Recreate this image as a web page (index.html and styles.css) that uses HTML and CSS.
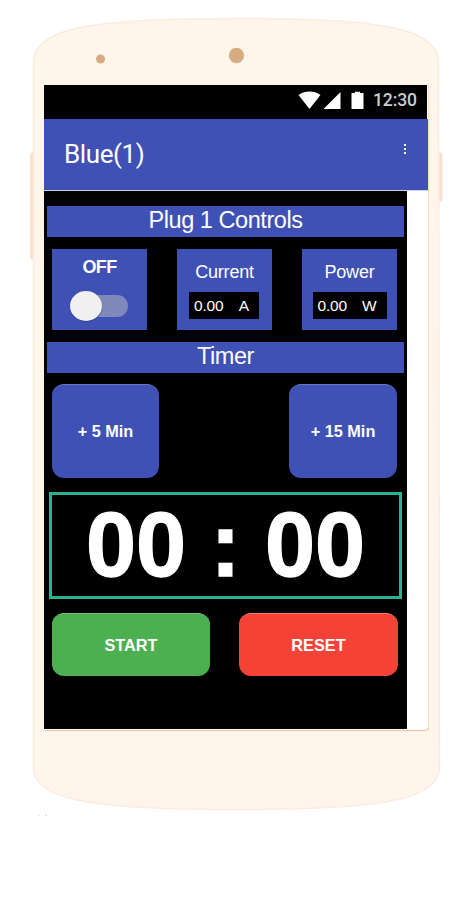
FILE: index.html
```html
<!DOCTYPE html>
<html lang="en">
<head>
<meta charset="utf-8">
<title>Blue(1)</title>
<link rel="stylesheet" href="styles.css">
</head>
<body>
<div class="phone">
  <svg class="shell" width="463" height="830" viewBox="0 0 463 830" aria-hidden="true">
    <path d="M33.500 153H30.500V259H33.500ZM439 153H442V201H439Z" fill="#f8e0ca" stroke="#f7e4d5"/>
    <path d="M33.500 62C33.500 26 100 18.500 236 18.500S438.500 26 438.500 62L439.500 768C439.500 802 370 809.500 236 809.500S33.500 802 33.500 768Z" fill="#fff5ea" stroke="#fcebe0" stroke-width="1.500"/>
    <circle cx="100.500" cy="59" r="4.500" fill="#d6ad82"/>
    <circle cx="236.500" cy="55.500" r="7.700" fill="#d6ad82"/>
    <path d="M39 815.500h1M45 815.500h2" stroke="#ddd"/>
  </svg>
  <main class="screen">
    <div class="status">
      <svg class="signals" width="66" height="20" viewBox="0 0 66 20" fill="#fff" aria-hidden="true">
        <path d="M0.500 4C7-0.600 16-0.600 22.500 4L11.500 18Z"/>
        <path d="M42.500 1V18H25.500Z"/>
        <path d="M53.500 2H57V.8H62V2H65.500V18H53.500Z"/>
      </svg>
      <span class="clock">12:30</span>
    </div>
    <header class="appbar">
      <h1>Blue(1)</h1>
      <div class="menu"><i></i><i></i><i></i></div>
    </header>
    <div class="content">
      <h2>Plug 1 Controls</h2>
      <div class="cards">
        <section class="card toggle">
          <b>OFF</b>
          <div class="switch"><div class="knob"></div></div>
        </section>
        <section class="card">
          <span class="label">Current</span>
          <div class="reading amps"><span>0.00</span><span>A</span></div>
        </section>
        <section class="card">
          <span class="label">Power</span>
          <div class="reading watts"><span>0.00</span><span>W</span></div>
        </section>
      </div>
      <h2 class="timer-title">Timer</h2>
      <div class="row adders">
        <button>+ 5 Min</button>
        <button class="wide">+ 15 Min</button>
      </div>
      <div class="timer"><span>00</span><span>:</span><span>00</span></div>
      <div class="row actions">
        <button class="start">START</button>
        <button class="reset">RESET</button>
      </div>
    </div>
  </main>
</div>
</body>
</html>
```
FILE: styles.css
```css
* { box-sizing: border-box; }
body { margin: 0; background: #fff; color: #fff; font-family: "Liberation Sans", Arial, sans-serif; }
.phone { position: relative; width: 463px; height: 909px; padding: 85px 35px 0 44px; overflow: hidden; }
.shell { position: absolute; left: 0; top: 0; }
.screen { position: relative; width: 384px; height: 644px; background: #fff; border-radius: 0 0 3px 0; box-shadow: 1px 0 0 #f3dfc8, 0 1px 0 #fff8f2, 1px 2px 1px #ebc5ad; }
.status { display: flex; justify-content: flex-end; width: 383px; height: 34px; padding: 6px 10px 0 0; background: #000; }
.clock { width: 44px; margin-left: 9px; color: #ccc; font: 500 17.5px/18px Roboto, sans-serif; letter-spacing: -.1px; white-space: nowrap; }
.appbar { display: flex; justify-content: space-between; height: 72px; padding: 0 22px 0 20px; background: #3f51b5; border-bottom: 1px solid #c5d1f2; }
h1 { margin: 0; font: 400 26px/71px Roboto, sans-serif; letter-spacing: -.4px; }
.menu { display: flex; flex-direction: column; gap: 2px; padding-top: 25px; }
.menu i { width: 2px; height: 2px; background: #fff; }
.content { width: 363px; height: 538px; padding: 15px 3px 0; background: #000; }
h2 { height: 31px; margin: 0; background: #3f51b5; font-size: 23.5px; font-weight: 400; line-height: 28px; letter-spacing: -.45px; text-align: center; }
.cards { display: flex; gap: 30px; margin: 12px 5px; }
.card { display: flex; flex-direction: column; align-items: center; width: 95px; height: 81px; background: #3f51b5; }
.label { height: 43px; font-size: 18px; line-height: 46px; letter-spacing: -.2px; }
.toggle b { height: 36px; font-size: 18px; line-height: 37px; letter-spacing: -.6px; }
.switch { width: 58px; height: 22px; margin: 10px 2px 0 0; border-radius: 11px; background: #8089bb; }
.knob { width: 32px; height: 30px; margin-top: -4px; border-radius: 50%; background: #f0f0f0; box-shadow: 0 1px 1px #34428f; }
.reading { display: flex; justify-content: space-between; height: 27px; padding: 0 10px 0 5px; background: #000; font-size: 15.5px; line-height: 27px; letter-spacing: -.2px; }
.amps { width: 70px; margin-right: 1px; }
.watts { width: 74px; margin-right: 0; }
.row { display: flex; justify-content: space-between; }
button { padding: 0; border: 0; border-top: 1px solid #6977bd; border-radius: 12px; background: #3f51b5; color: #fff; font: bold 16.3px "Liberation Sans", Arial, sans-serif; }
.adders { margin: 11px 7px 14px 5px; }
.adders button { width: 107px; height: 94px; }
.adders .wide { width: 108px; }
.timer { display: flex; justify-content: space-between; width: 353px; height: 107px; margin-left: 2px; padding: 0 34px; border: 3px solid #2ab393; font-size: 90px; font-weight: bold; line-height: 100px; -webkit-text-stroke: 1.3px #fff; }
.actions { margin: 14px 6px 0 5px; }
.actions button { width: 159px; height: 63px; }
.actions .start { width: 158px; background: #4caf50; border-color: #78bd78; }
.actions .reset { background: #f44336; border-color: #f77a70; }
```
